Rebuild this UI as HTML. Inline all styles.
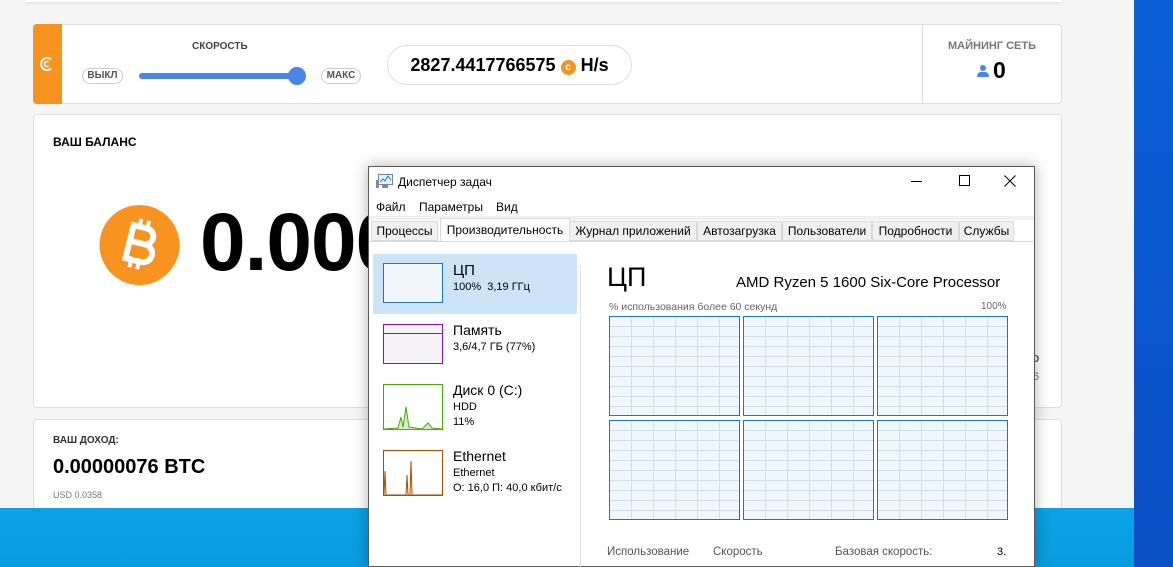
<!DOCTYPE html>
<html><head><meta charset="utf-8"><style>
*{margin:0;padding:0;box-sizing:border-box}
body{width:1173px;height:567px;overflow:hidden;position:relative;background:#f5f5f5;font-family:"Liberation Sans",sans-serif}
.a{position:absolute}
.card{position:absolute;background:#fff;border:1px solid #dedede;border-radius:4px}
.pill{position:absolute;border:1px solid #ccc;border-radius:10px;font-size:10px;font-weight:bold;color:#555;text-align:center;line-height:14px;height:16px}
.w{font-family:"Liberation Sans",sans-serif;color:#000;white-space:nowrap}
.tab{position:absolute;top:221px;height:20px;font-size:12px;line-height:19px;background:#f0f0f0;border:1px solid #d9d9d9;text-align:center;overflow:hidden}
.g{position:absolute;width:131px;height:100px;border:1px solid #1979ba;background-color:#f1f6fa;background-image:linear-gradient(#c9e0f0 1px,transparent 1px),linear-gradient(90deg,#c9e0f0 1px,transparent 1px);background-size:22px 10px;background-position:-1px 9px}
</style></head><body>
<div class="a" style="left:25px;top:0;width:1037px;height:2px;background:#fff;box-shadow:0 1px 3px rgba(0,0,0,.15)"></div>
<div class="a" style="left:1134px;top:0;width:39px;height:567px;background:linear-gradient(#0a5fd9,#0a4fc4)"></div>

<div class="card" style="left:33px;top:24px;width:1029px;height:80px"></div>
<div class="a" style="left:33px;top:24px;width:29px;height:80px;background:#f7931e;border-radius:4px 0 0 4px"><svg class="a" style="left:6px;top:31px" width="16" height="18"><path d="M12 4.5A6 6 0 1 0 12 13.5" fill="none" stroke="#fff" stroke-width="2"/><path d="M9.5 7A2.5 2.5 0 1 0 9.5 11" fill="none" stroke="#fff" stroke-width="1.5"/></svg></div>
<div class="a" style="left:192px;top:41px;font-size:10px;font-weight:bold;color:#444">СКОРОСТЬ</div>
<div class="pill" style="left:82px;top:68px;width:41px">ВЫКЛ</div>
<div class="a" style="left:139px;top:73px;width:160px;height:6px;background:#4a86e8;border-radius:3px"></div>
<div class="a" style="left:288px;top:67px;width:18px;height:18px;background:#4a86e8;border-radius:50%"></div>
<div class="pill" style="left:321px;top:68px;width:40px">МАКС</div>
<div class="a" style="left:387px;top:45px;width:245px;height:40px;border:1px solid #ddd;border-radius:20px;font-size:18px;font-weight:bold;line-height:38px;text-align:center">2827.4417766575 <span style="display:inline-block;width:15px;height:15px;border-radius:50%;background:#f7931e;color:#fff;font-size:10px;line-height:15px;vertical-align:1px">c</span> H/s</div>
<div class="a" style="left:922px;top:24px;width:1px;height:80px;background:#dedede"></div>
<div class="a" style="left:922px;top:40px;width:140px;text-align:center;font-size:11px;font-weight:bold;color:#777">МАЙНИНГ СЕТЬ</div>
<div class="a" style="left:977px;top:57px;font-size:23px;font-weight:bold"><span style="display:inline-block;width:12px;height:12px;position:relative;vertical-align:1px;margin-right:4px"><span class="a" style="left:3px;top:0;width:6px;height:6px;border-radius:50%;background:#4a86e8"></span><span class="a" style="left:0;top:7px;width:12px;height:5px;border-radius:5px 5px 1px 1px;background:#4a86e8"></span></span>0</div>

<div class="card" style="left:33px;top:114px;width:1029px;height:294px"></div>
<div class="a" style="left:53px;top:135px;font-size:12px;font-weight:bold">ВАШ БАЛАНС</div>
<svg class="a" style="left:99px;top:205px" width="81" height="80"><circle cx="40.5" cy="40" r="40" fill="#f7931e"/><g transform="rotate(14 40 40)" fill="none" stroke="#fff" stroke-width="6"><path d="M30 22h14a8 8 0 0 1 0 16H30M30 38h16a9 9 0 0 1 0 18H30M30 19v40" stroke-linejoin="round"/><path d="M36 14v8M44 14v8M36 56v8M44 56v8" stroke-width="4"/></g></svg>
<div class="a" style="left:200px;top:196px;font-size:82px;font-weight:bold;letter-spacing:-1px">0.000</div>
<div class="a" style="left:1032px;top:354px;font-size:10px;font-weight:bold;color:#555">D</div>
<div class="a" style="left:1033px;top:371px;font-size:11px;color:#777">6</div>

<div class="card" style="left:33px;top:419px;width:1029px;height:100px"></div>
<div class="a" style="left:53px;top:435px;font-size:10px;font-weight:bold;color:#333">ВАШ ДОХОД:</div>
<div class="a" style="left:53px;top:456px;font-size:20px;font-weight:bold">0.00000076 BTC</div>
<div class="a" style="left:53px;top:490px;font-size:9px;color:#777">USD 0.0358</div>
<div class="a" style="left:0;top:508px;width:1134px;height:59px;background:linear-gradient(#09a3e6,#0a9bdf)"></div>

<div class="a w" style="left:368px;top:166px;width:667px;height:401px;background:#fff;border:1px solid #5a5a5a;box-shadow:0 0 14px rgba(0,0,0,.3)"></div>
<svg class="a" style="left:376px;top:174px" width="17" height="15"><rect x="2.5" y="0.5" width="14" height="10" fill="#e8f2fa" stroke="#6a8aa8"/><path d="M4 8l3-3 2 2 3-5 3 4" fill="none" stroke="#2a7ab8"/><rect x="0" y="6" width="3" height="8" fill="#889"/><rect x="6" y="11" width="6" height="3" fill="#889"/></svg>
<div class="a w" style="left:398px;top:175px;font-size:12px">Диспетчер задач</div>
<div class="a" style="left:911px;top:181px;width:11px;height:1px;background:#000"></div>
<div class="a" style="left:959px;top:175px;width:11px;height:11px;border:1px solid #000"></div>
<svg class="a" style="left:1004px;top:175px" width="12" height="12"><path d="M0.5 0.5l11 11M11.5 0.5l-11 11" stroke="#000" stroke-width="1"/></svg>
<div class="a w" style="left:376px;top:200px;font-size:12px">Файл</div>
<div class="a w" style="left:419px;top:200px;font-size:12px">Параметры</div>
<div class="a w" style="left:496px;top:200px;font-size:12px">Вид</div>
<div class="a" style="left:369px;top:216px;width:665px;height:4px;background:#f0f0f0"></div>
<div class="tab w" style="left:371px;width:67px">Процессы</div>
<div class="tab w" style="left:440px;top:218px;width:130px;height:24px;background:#fff;border-bottom:none;line-height:22px">Производительность</div>
<div class="tab w" style="left:569px;width:128px">Журнал приложений</div>
<div class="tab w" style="left:697px;width:85px">Автозагрузка</div>
<div class="tab w" style="left:782px;width:90px">Пользователи</div>
<div class="tab w" style="left:872px;width:87px">Подробности</div>
<div class="tab w" style="left:959px;width:55px">Службы</div>
<div class="a" style="left:369px;top:241px;width:665px;height:1px;background:#d9d9d9"></div>

<div class="a" style="left:373px;top:254px;width:204px;height:60px;background:#cce4f7"></div>
<div class="a" style="left:383px;top:263px;width:60px;height:40px;border:1px solid #1979ba;background:#f1f6fa"></div>
<div class="a w" style="left:453px;top:262px;font-size:15px">ЦП</div>
<div class="a w" style="left:453px;top:281px;font-size:11px">100%&nbsp; 3,19 ГГц</div>
<div class="a" style="left:383px;top:324px;width:60px;height:40px;border:1px solid #8b12ae;background:#f4f2f4"><div class="a" style="left:0;top:8px;width:58px;height:1px;background:#8b12ae"></div></div>
<div class="a w" style="left:453px;top:322px;font-size:14px">Память</div>
<div class="a w" style="left:453px;top:341px;font-size:11px">3,6/4,7 ГБ (77%)</div>
<div class="a" style="left:383px;top:384px;width:60px;height:46px;border:1px solid #4da60c;background:#fff"><svg class="a" style="left:0;top:0" width="58" height="44"><polyline points="0,44 14,43 17,32 19,42 22,22 25,42 38,44 44,38 48,43 58,44" fill="#d6ecc4" stroke="#4da60c"/></svg></div>
<div class="a w" style="left:453px;top:382px;font-size:14px">Диск 0 (C:)</div>
<div class="a w" style="left:453px;top:401px;font-size:11px">HDD</div>
<div class="a w" style="left:453px;top:416px;font-size:11px">11%</div>
<div class="a" style="left:383px;top:450px;width:60px;height:46px;border:1px solid #a74f01;background:#fff"><svg class="a" style="left:0;top:0" width="58" height="44"><polyline points="0,44 1,20 2,44 22,44 23,24 24,44 26,44 27,10 28,44 58,44" fill="none" stroke="#a74f01"/></svg></div>
<div class="a w" style="left:453px;top:448px;font-size:14px">Ethernet</div>
<div class="a w" style="left:453px;top:467px;font-size:11px">Ethernet</div>
<div class="a w" style="left:453px;top:482px;font-size:11px">О: 16,0 П: 40,0 кбит/с</div>
<div class="a" style="left:580px;top:265px;width:1px;height:302px;background:#e0e0e0"></div>

<div class="a w" style="left:607px;top:262px;font-size:27px">ЦП</div>
<div class="a w" style="left:736px;top:274px;font-size:15px">AMD Ryzen 5 1600 Six-Core Processor</div>
<div class="a w" style="left:609px;top:301px;font-size:10.5px;color:#666">% использования более 60 секунд</div>
<div class="a w" style="left:981px;top:301px;font-size:10px;color:#666">100%</div>
<div class="g" style="left:609px;top:316px"></div>
<div class="g" style="left:743px;top:316px"></div>
<div class="g" style="left:877px;top:316px"></div>
<div class="g" style="left:609px;top:420px"></div>
<div class="g" style="left:743px;top:420px"></div>
<div class="g" style="left:877px;top:420px"></div>
<div class="a w" style="left:607px;top:546px;font-size:11.5px;color:#555">Использование</div>
<div class="a w" style="left:713px;top:546px;font-size:11.5px;color:#555">Скорость</div>
<div class="a w" style="left:835px;top:546px;font-size:11.5px;color:#555">Базовая скорость:</div>
<div class="a w" style="left:997px;top:546px;font-size:11px">3.</div>
</body></html>
